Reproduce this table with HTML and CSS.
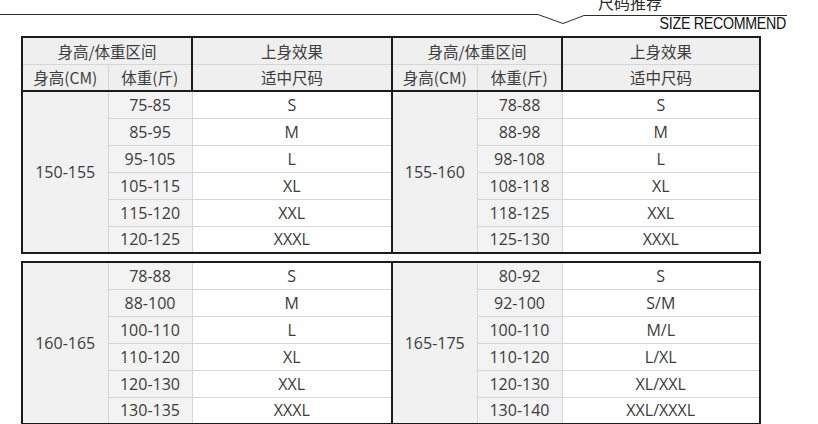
FILE: index.html
```html
<!DOCTYPE html>
<html lang="zh-CN">
<head>
<meta charset="utf-8">
<title>尺码推荐</title>
<link rel="stylesheet" href="styles.css">
</head>
<body>
<div class="page">
  <header class="banner">
    <svg class="banner-line" width="818" height="37" viewBox="0 0 818 37" aria-hidden="true">
      <polyline points="0,14.5 538,14.5 563,23.5 584,15.5 787,15.5" fill="none" stroke="#2b2b2b" stroke-width="1"/>
    </svg>
    <div class="banner-cn">尺码推荐</div>
    <div class="banner-en">SIZE RECOMMEND</div>
  </header>

  <table class="chart">
    <colgroup>
      <col class="c-h"><col class="c-w"><col class="c-s">
      <col class="c-h2"><col class="c-w2"><col class="c-s2">
    </colgroup>
    <thead>
      <tr>
        <th colspan="2">身高/体重区间</th>
        <th class="bl">上身效果</th>
        <th colspan="2" class="mid">身高/体重区间</th>
        <th class="bl">上身效果</th>
      </tr>
      <tr>
        <th>身高(CM)</th>
        <th>体重(斤)</th>
        <th class="bl">适中尺码</th>
        <th class="mid">身高(CM)</th>
        <th>体重(斤)</th>
        <th class="bl">适中尺码</th>
      </tr>
    </thead>
    <tbody>
      <tr><td class="h" rowspan="6">150-155</td><td class="w">75-85</td><td class="s">S</td><td class="h mid" rowspan="6">155-160</td><td class="w">78-88</td><td class="s">S</td></tr>
      <tr><td class="w">85-95</td><td class="s">M</td><td class="w">88-98</td><td class="s">M</td></tr>
      <tr><td class="w">95-105</td><td class="s">L</td><td class="w">98-108</td><td class="s">L</td></tr>
      <tr><td class="w">105-115</td><td class="s">XL</td><td class="w">108-118</td><td class="s">XL</td></tr>
      <tr><td class="w">115-120</td><td class="s">XXL</td><td class="w">118-125</td><td class="s">XXL</td></tr>
      <tr><td class="w">120-125</td><td class="s">XXXL</td><td class="w">125-130</td><td class="s">XXXL</td></tr>
    </tbody>
  </table>

  <table class="chart second">
    <colgroup>
      <col class="c-h"><col class="c-w"><col class="c-s">
      <col class="c-h2"><col class="c-w2"><col class="c-s2">
    </colgroup>
    <tbody>
      <tr><td class="h" rowspan="6">160-165</td><td class="w">78-88</td><td class="s">S</td><td class="h mid" rowspan="6">165-175</td><td class="w">80-92</td><td class="s">S</td></tr>
      <tr><td class="w">88-100</td><td class="s">M</td><td class="w">92-100</td><td class="s">S/M</td></tr>
      <tr><td class="w">100-110</td><td class="s">L</td><td class="w">100-110</td><td class="s">M/L</td></tr>
      <tr><td class="w">110-120</td><td class="s">XL</td><td class="w">110-120</td><td class="s">L/XL</td></tr>
      <tr><td class="w">120-130</td><td class="s">XXL</td><td class="w">120-130</td><td class="s">XL/XXL</td></tr>
      <tr><td class="w">130-135</td><td class="s">XXXL</td><td class="w">130-140</td><td class="s">XXL/XXXL</td></tr>
    </tbody>
  </table>
</div>
</body>
</html>
```

FILE: styles.css
```css
html, body {
  margin: 0;
  padding: 0;
  background: #ffffff;
}

.page {
  width: 818px;
  height: 424px;
  overflow: hidden;
  font-family: "Open Sans", "Noto Sans CJK SC", sans-serif;
  color: #3c3c3c;
}

.banner {
  position: relative;
  height: 36px;
  display: flex;
  flex-direction: column;
  align-items: flex-end;
  padding-right: 32px;
}

.banner-line {
  position: absolute;
  left: 0;
  top: 0;
}

.banner-cn {
  position: relative;
  margin-top: -6px;
  margin-right: 124px;
  font-family: "Noto Sans CJK SC", sans-serif;
  font-size: 16px;
  line-height: 16px;
  color: #2b2b2b;
}

.banner-en {
  position: relative;
  margin-top: 5px;
  font-family: "Liberation Sans", Arial, sans-serif;
  font-size: 16.5px;
  line-height: 17px;
  color: #111111;
  letter-spacing: -0.3px;
  transform: scaleX(0.86);
  transform-origin: right center;
}

.chart {
  margin-left: 21px;
  width: 738px;
  border-collapse: collapse;
  table-layout: fixed;
  border: 2px solid #1c1c1c;
  font-size: 16px;
}

.chart.second {
  margin-top: 7px;
}

.c-h { width: 86px; }
.c-w { width: 84px; }
.c-s { width: 200px; }
.c-h2 { width: 85px; }
.c-w2 { width: 85px; }
.c-s2 { width: 198px; }

.chart tr {
  height: 27px;
}

.chart th,
.chart td {
  padding: 0;
  text-align: center;
  vertical-align: middle;
  font-weight: normal;
  line-height: 18px;
  white-space: nowrap;
  border: 1px solid #d6d6d6;
}

.chart th {
  background: #efefef;
  font-family: "Noto Sans CJK SC", sans-serif;
  font-size: 15.5px;
}

.chart thead tr:last-child th {
  border-bottom: 2px solid #1c1c1c;
}

.chart th.bl {
  border-left: 2px solid #1c1c1c;
}

.chart .mid {
  border-left: 2px solid #1c1c1c;
}

.chart td.h {
  background: #f1f1f1;
}

.chart td.w {
  background: #f3f3f3;
}

.chart td.s {
  background: #ffffff;
}
```
